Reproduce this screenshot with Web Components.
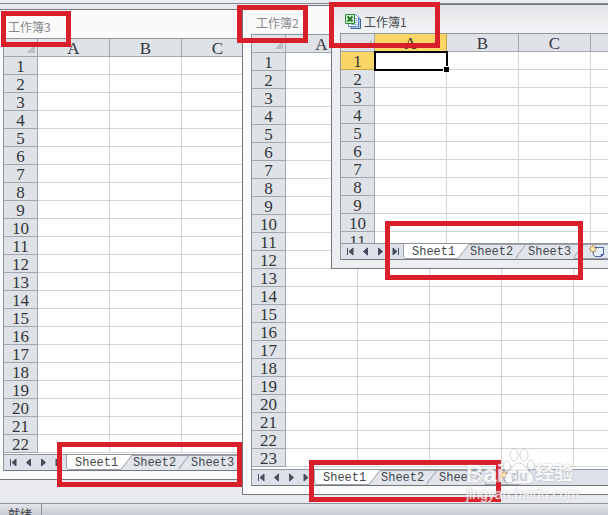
<!DOCTYPE html>
<html lang="zh-CN">
<head>
<meta charset="utf-8">
<title>工作簿</title>
<style>
    body
    {
        margin: 0;
        height: 100vh;
        display: flex;
        flex-direction: column;
        overflow: hidden;
        position: relative;
        background: #e8eaef;
        color: #3b3f45;
        font-family: "Liberation Serif", "Noto Sans CJK SC", serif;
    }

    .ribbon-edge
    {
        flex: 0 0 3px;
        background: #e9edf2;
        border-bottom: 1px solid #84888f;
    }
</style>
</head>
<body>
    <div class="ribbon-edge"></div>
    <work-area>
        <book-window name="工作簿3" rows="22" cols="3" style="left: -6px; top: 5px; right: 0; height: 471px"></book-window>
        <book-window name="工作簿2" rows="23" cols="5" style="left: 242px; top: 1px; right: -10px; height: 490px"></book-window>
        <book-window name="工作簿1" rows="11" cols="4" active style="left: 331px; top: 0; right: -10px; height: 265px">
            <excel-icon slot="icon"></excel-icon>
        </book-window>
    </work-area>
    <status-bar>就绪</status-bar>

    <mark-box style="left: 1px; top: 11px; width: 70px; height: 36px"></mark-box>
    <mark-box style="left: 237px; top: 5px; width: 71px; height: 38px"></mark-box>
    <mark-box style="left: 329px; top: 2px; width: 111px; height: 46px"></mark-box>
    <mark-box style="left: 385px; top: 221px; width: 198px; height: 59px"></mark-box>
    <mark-box style="left: 57px; top: 442px; width: 185px; height: 45px"></mark-box>
    <mark-box style="left: 309px; top: 460px; width: 192px; height: 42px"></mark-box>
    <water-mark style="left: 466px; top: 448px"></water-mark>

<script>
customElements.define('work-area', class WorkArea extends HTMLElement
{
    constructor()
    {
        super();
        this.attachShadow({ mode: 'open' }).innerHTML = `
            <style>
                :host
                {
                    display: block;
                    flex: 1;
                    min-height: 0;
                    position: relative;
                    overflow: hidden;
                    background: #e8eaef;
                }
            </style>
            <slot></slot>
        `;
    }
});

customElements.define('book-window', class BookWindow extends HTMLElement
{
    constructor()
    {
        super();
        this.attachShadow({ mode: 'open' });
    }

    connectedCallback()
    {
        const name = this.getAttribute('name');
        const active = this.hasAttribute('active') ? 'active' : '';

        this.shadowRoot.innerHTML = `
            <style>
                :host
                {
                    position: absolute;
                    box-sizing: border-box;
                    display: flex;
                    flex-direction: column;
                    padding: 0 8px 8px;
                    border: 1px solid #74777e;
                    background: #fafafb;
                    color: #85878b;
                }

                :host([active])
                {
                    background: linear-gradient(#e4e6e9, #f2f3f5 28px, #eceef2 60px);
                    color: #46494e;
                }

                header
                {
                    flex: 0 0 28px;
                    box-sizing: border-box;
                    display: flex;
                    align-items: center;
                    gap: 3px;
                    padding: 4px 5px 0;
                    font: 12px "Noto Sans CJK SC", sans-serif;
                }

                grid-sheet
                {
                    flex: 1;
                    min-height: 0;
                }
            </style>
            <header><slot name="icon"></slot><span>${name}</span></header>
            <grid-sheet rows="${this.getAttribute('rows')}" cols="${this.getAttribute('cols')}" ${active}></grid-sheet>
            <sheet-tabs names="Sheet1,Sheet2,Sheet3"></sheet-tabs>
        `;
    }
});

customElements.define('grid-sheet', class GridSheet extends HTMLElement
{
    constructor()
    {
        super();
        this.attachShadow({ mode: 'open' });
    }

    connectedCallback()
    {
        const rows = Number(this.getAttribute('rows'));
        const cols = Number(this.getAttribute('cols'));
        const letters = [...'ABCDEFGHIJ'].slice(0, cols);

        let body = '';

        for(let i = 1; i <= rows; i++)
        {
            body += `<tr><th scope="row">${i}</th>${'<td></td>'.repeat(cols)}</tr>`;
        }

        this.shadowRoot.innerHTML = `
            <style>
                :host
                {
                    display: block;
                    overflow: hidden;
                    border: solid #92969d;
                    border-width: 1px 0 0 1px;
                    background: #fff;
                    color: #33363b;
                }

                table
                {
                    table-layout: fixed;
                    width: 0;
                    border-collapse: separate;
                    border-spacing: 0;
                }

                col { width: 72px; }
                col.head { width: 34px; }
                tr { height: 18px; }

                th, td
                {
                    box-sizing: border-box;
                    height: 18px;
                    padding: 0;
                    border: solid #d3d5d8;
                    border-width: 0 1px 1px 0;
                    font-size: 17px;
                    font-weight: normal;
                    line-height: 15px;
                }

                th
                {
                    padding-top: 2px;
                    background: #dfe2e7;
                    border-color: #a2a6ad;
                }

                .corner
                {
                    border-color: #a2a6ad;
                    background: linear-gradient(135deg, transparent 50%, #bcc0c6 50%) 22px 6px / 9px 8px no-repeat #dfe2e7;
                }

                :host([active]) thead th:nth-child(2),
                :host([active]) tbody tr:first-child th
                {
                    background: #fbd565;
                    border-color: #c9a544;
                }

                :host([active]) tbody tr:first-child td:nth-child(2)
                {
                    position: relative;
                }

                /* selection frame and its fill handle */
                :host([active]) tbody tr:first-child td:nth-child(2)::before
                {
                    content: '';
                    position: absolute;
                    inset: -1px -2px -2px -1px;
                    border: 2px solid #000;
                }

                :host([active]) tbody tr:first-child td:nth-child(2)::after
                {
                    content: '';
                    position: absolute;
                    right: -3px;
                    bottom: -3px;
                    width: 5px;
                    height: 5px;
                    border: solid #fff;
                    border-width: 1px 0 0 1px;
                    background: #000;
                }
            </style>
            <table>
                <colgroup><col class="head">${'<col>'.repeat(cols)}</colgroup>
                <thead><tr><td class="corner"></td>${letters.map(l => `<th scope="col">${l}</th>`).join('')}</tr></thead>
                <tbody>${body}</tbody>
            </table>
        `;
    }
});

customElements.define('sheet-tabs', class SheetTabs extends HTMLElement
{
    constructor()
    {
        super();
        this.attachShadow({ mode: 'open' });
    }

    connectedCallback()
    {
        const arrows =
        [
            ['第一张', 'M4.5 4v7M10 4v7L6 7.5z'],
            ['上一张', 'M9.500 4v7L5.500 7.500z'],
            ['下一张', 'M5.500 4v7L9.500 7.500z'],
            ['最后一张', 'M10.500 4v7M5 4v7L9 7.500z']
        ];

        const tabs = this.getAttribute('names').split(',').map((name, i) => `
            <button class="tab ${i ? '' : 'on'}">
                <svg width="72" height="15" aria-hidden="true">
                    ${i
                        ? '<path d="M0 14.500L10 .5H69L58 14.500z" fill="#e2e5eb"/><path d="M-1 14.500L10 .5H69L58 14.500" fill="none" stroke="#9ca0a8"/>'
                        : '<path d="M3 0H69L58 14H3z" fill="#fff"/><path d="M69 .5L58 14.500H5L3.500 12V0" fill="none" stroke="#9ca0a8"/>'}
                </svg>
                <span>${name}</span>
            </button>`).join('');

        this.shadowRoot.innerHTML = `
            <style>
                :host
                {
                    flex: 0 0 15px;
                    display: flex;
                    padding-left: 2px;
                    overflow: hidden;
                    border: solid #92969d;
                    border-width: 1px 0 1px 1px;
                    border-bottom-color: #74777e;
                    background: #dce1e9;
                    color: #44474d;
                }

                button
                {
                    flex: none;
                    width: 15px;
                    height: 15px;
                    padding: 0;
                    border: 0;
                    background: none;
                    color: inherit;
                    font: 12px/16px "Liberation Mono", monospace;
                }

                svg { display: block; }

                .nav path
                {
                    fill: #464d5c;
                    stroke: #464d5c;
                }

                .tab, .new
                {
                    position: relative;
                    width: 58px;
                }

                .tab.on { z-index: 1; }

                .tab svg, .new .edge
                {
                    position: absolute;
                    left: -3px;
                    top: 0;
                }

                .tab span
                {
                    position: relative;
                    display: block;
                    padding-left: 9px;
                    text-align: left;
                }

                .new .glyph
                {
                    position: relative;
                    margin-left: 11px;
                }
            </style>
            ${arrows.map(([label, d]) => `<button class="nav" aria-label="${label}"><svg width="15" height="15"><path d="${d}"/></svg></button>`).join('')}
            ${tabs}
            <button class="new" aria-label="插入工作表">
                <svg class="edge" width="50" height="15"><path d="M-1 14.500L10 .5H45L34 14.500z" fill="#e2e5eb" stroke="#9ca0a8"/></svg>
                <svg class="glyph" width="18" height="15">
                    <path d="M7 3.500H15.500V10.500L13 12.500H7L5 10z" fill="#e4efff" stroke="#4a68a3"/>
                    <path d="M15.500 10.500H13V12.500z" fill="#4a68a3" stroke="#4a68a3"/>
                    <path d="M5 1V9M1 5H9M2 2L8 8M8 2L2 8" stroke="#c47a22"/>
                    <circle cx="5" cy="5" r="2" fill="#fff2b3"/>
                </svg>
            </button>
        `;
    }
});

customElements.define('excel-icon', class ExcelIcon extends HTMLElement
{
    constructor()
    {
        super();
        this.attachShadow({ mode: 'open' }).innerHTML = `
            <style>
                :host { display: block; }
                svg { display: block; }
            </style>
            <svg width="16" height="16" viewBox="0 0 16 16" aria-hidden="true">
                <path d="M6 4.500H13L15.500 6V15.500H6z" fill="#a9c6ec" stroke="#3f639c"/>
                <path d="M3.500 1.500H10.500L13.500 4V13.500H3.500z" fill="#f3f8ff" stroke="#5f86bd"/>
                <path d="M10 5.500H12.500M10 7.500H12.500M10 9.500H12.500M6 11.500H12.500" stroke="#8fb0dc"/>
                <path d="M.5 1.500H9.500V10.500H.5z" fill="#d9efd2" stroke="#2f8a35"/>
                <path d="M2.500 3.500L7.500 8.500M7.500 3.500L2.500 8.500" stroke="#1f7a2a" stroke-width="2"/>
            </svg>
        `;
    }
});

customElements.define('status-bar', class StatusBar extends HTMLElement
{
    constructor()
    {
        super();
        this.attachShadow({ mode: 'open' }).innerHTML = `
            <style>
                :host
                {
                    flex: 0 0 11px;
                    display: flex;
                    align-items: flex-start;
                    overflow: hidden;
                    border-top: 1px solid #8e9299;
                    background: linear-gradient(#e4e6ea, #c6cad0);
                    font: 12px/18px "Noto Sans CJK SC", sans-serif;
                }

                span
                {
                    padding: 1px 9px 0 8px;
                    border-right: 1px solid #8e9299;
                }
            </style>
            <span><slot></slot></span>
        `;
    }
});

customElements.define('mark-box', class MarkBox extends HTMLElement
{
    constructor()
    {
        super();
        this.attachShadow({ mode: 'open' }).innerHTML = `
            <style>
                :host
                {
                    position: absolute;
                    box-sizing: border-box;
                    border: 5px solid #d9202a;
                    pointer-events: none;
                }
            </style>
        `;
    }
});

customElements.define('water-mark', class WaterMark extends HTMLElement
{
    constructor()
    {
        super();
        this.attachShadow({ mode: 'open' }).innerHTML = `
            <style>
                :host
                {
                    position: absolute;
                    display: block;
                    color: #fff;
                    opacity: .8;
                    text-shadow: 0 0 2px #a4a7ac;
                    font-family: "Liberation Sans", "Noto Sans CJK SC", sans-serif;
                    white-space: nowrap;
                    pointer-events: none;
                }

                .brand
                {
                    display: flex;
                    align-items: flex-end;
                    height: 38px;
                    font-size: 24px;
                    font-weight: bold;
                    line-height: 24px;
                }

                .paw
                {
                    display: grid;
                    width: 32px;
                    height: 38px;
                }

                .paw > *
                {
                    grid-area: 1 / 1;
                }

                .paw span
                {
                    align-self: end;
                    justify-self: center;
                    color: #c9ccd2;
                    font-size: 14px;
                    line-height: 19px;
                    text-shadow: none;
                }

                .exp { font-size: 19px; }

                .site
                {
                    font-size: 14px;
                    line-height: 16px;
                }
            </style>
            <div class="brand">
                <span>Bai</span>
                <div class="paw">
                    <svg width="32" height="38" aria-hidden="true" fill="#fff" stroke="#c8cad0">
                        <ellipse cx="4" cy="18" rx="3.500" ry="5"/>
                        <ellipse cx="11" cy="7" rx="4" ry="6"/>
                        <ellipse cx="21" cy="7" rx="4" ry="6"/>
                        <ellipse cx="28" cy="17" rx="3.500" ry="5"/>
                        <path d="M16 15C10 15 9 21 4 25C0 29 1 36 8 36H24C31 36 32 29 28 25C23 21 22 15 16 15z"/>
                    </svg>
                    <span>du</span>
                </div>
                <span class="exp">经验</span>
            </div>
            <div class="site">jingyan.baidu.com</div>
        `;
    }
});
</script>
</body>
</html>
